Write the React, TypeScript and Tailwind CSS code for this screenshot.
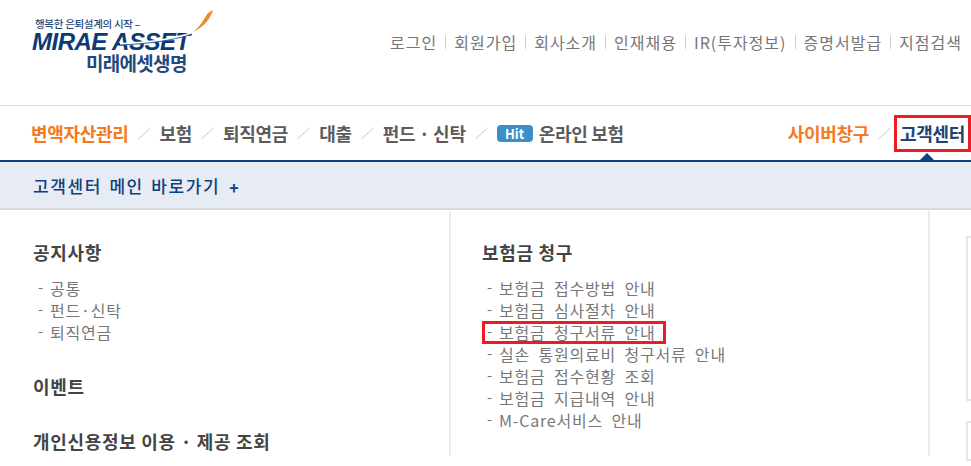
import React from "react";

const font = "font-['Noto_Sans_CJK_KR','Liberation_Sans',sans-serif]";

const topLinks = ["로그인", "회원가입", "회사소개", "인재채용", "IR(투자정보)", "증명서발급", "지점검색"];
const noticeLinks = ["공통", "펀드·신탁", "퇴직연금"];
const claimLinks = [
  "보험금 접수방법 안내",
  "보험금 심사절차 안내",
  "보험금 청구서류 안내",
  "실손 통원의료비 청구서류 안내",
  "보험금 접수현황 조회",
  "보험금 지급내역 안내",
  "M-Care서비스 안내",
];

const Logo: React.FC = () => (
  <div className="relative h-[70px] w-[220px]">
    <span className="absolute left-[35px] top-[17px] text-[10.5px] leading-[13px] font-medium tracking-[-0.3px] text-[#2b4a78] whitespace-nowrap">
      행복한 은퇴설계의 시작 –
    </span>
    <span className="absolute left-[32px] top-[32px] font-['Liberation_Sans',sans-serif] text-[24px] leading-[20px] font-bold italic tracking-[-0.5px] text-[#0b3a75] whitespace-nowrap">
      MIRAE ASSET
    </span>
    <span className="absolute left-[86px] top-[53px] text-[19px] leading-[20px] font-bold tracking-[-0.7px] text-[#1e4a80] whitespace-nowrap">
      미래에셋생명
    </span>
    <svg className="absolute left-0 top-0" width="220" height="70" viewBox="0 0 220 70">
      <path d="M193 32C200 27 204 19 208 13L213 10C211 18 204 27 193 32Z" fill="#f08a24" />
      <path d="M120 44C145 43 172 40 192 33" fill="none" stroke="#ffffff" strokeWidth="2" />
      <path d="M120 45C145 44 172 41 192 34" fill="none" stroke="#0b3a75" strokeWidth="0.8" />
    </svg>
  </div>
);

const Slash: React.FC = () => (
  <svg className="mx-[9px] shrink-0" width="13" height="14" viewBox="0 0 13 14">
    <line x1="0.5" y1="13" x2="12.5" y2="2" stroke="#c9c9c9" strokeWidth="1" />
  </svg>
);

const Section: React.FC<{ title: string; className?: string }> = ({ title, className }) => (
  <h3 className={`text-[18px] leading-[24px] font-bold tracking-[0.7px] text-[#444] ${className ?? ""}`}>{title}</h3>
);

const LinkRow: React.FC<{ label: string }> = ({ label }) => (
  <li className="flex h-[22px] items-center text-[16px] tracking-[0.8px] [word-spacing:4px] text-[#777] whitespace-nowrap">
    <span className="w-[12px] shrink-0 pb-[3px] text-[15px] leading-none">-</span>
    <span>{label}</span>
  </li>
);

export default function App() {
  return (
    <div className={`h-[466px] w-[971px] overflow-hidden bg-white ${font}`}>
      <header className="flex h-[106px] justify-between border-b border-[#dcdcdc]">
        <Logo />
        <nav className="flex h-fit items-center pt-[31px] pr-[9px] text-[16px] leading-[22px] tracking-[1px] text-[#767676]">
          {topLinks.map((t, i) => (
            <React.Fragment key={t}>
              {i > 0 && <span className="mx-[8px] h-[14px] w-px bg-[#cfcfcf]" />}
              <span className="whitespace-nowrap">{t}</span>
            </React.Fragment>
          ))}
        </nav>
      </header>

      <nav className="relative flex h-[56px] items-center justify-between border-b-2 border-[#0f3f7d] pl-[31px] text-[18px] font-bold tracking-[-0.3px] text-[#5c5c5c]">
        <div className="flex items-center">
          <span className="text-[#f47920]">변액자산관리</span>
          <Slash />
          <span>보험</span>
          <Slash />
          <span>퇴직연금</span>
          <Slash />
          <span>대출</span>
          <Slash />
          <span>펀드 · 신탁</span>
          <Slash />
          <span className="mr-[6px] h-[17px] w-[36px] rounded-[4px] bg-[#3b8fc9] text-center text-[13px] leading-[17px] tracking-normal text-white">Hit</span>
          <span>온라인 보험</span>
        </div>
        <div className="flex items-center pr-[6px]">
          <span className="text-[#f47920]">사이버창구</span>
          <Slash />
          <span className="text-[#1d4474]">고객센터</span>
        </div>
        <span className="absolute right-0 top-[9px] h-[37px] w-[77px] border-[3px] border-[#ed1c24]" />
        <span className="absolute right-[37px] top-[47px] h-0 w-0 border-x-[7px] border-b-[7px] border-x-transparent border-b-[#0f3f7d]" />
      </nav>

      <div className="flex h-[48px] items-center border-b-2 border-[#d5dae2] bg-[#e7ebf4] pl-[33px] pt-px text-[17px] font-medium tracking-[1.6px] [word-spacing:2px] text-[#0f3f7d]">
        고객센터 메인 바로가기
        <span className="ml-[9px] mt-[2px] text-[16px] font-bold">+</span>
      </div>

      <main className="flex h-[246px] pt-px text-left">
        <section className="w-[451px] shrink-0 border-r-2 border-[#ebebeb] pl-[33px] pt-[29px]">
          <Section title="공지사항" />
          <ul className="mt-[13px] pl-[5px]">
            {noticeLinks.map((t) => (
              <LinkRow key={t} label={t} />
            ))}
          </ul>
          <Section title="이벤트" className="mt-[31px]" />
          <Section title="개인신용정보 이용 · 제공 조회" className="mt-[31px]" />
        </section>

        <section className="w-[479px] shrink-0 border-r-2 border-[#ebebeb] pl-[31px] pt-[29px]">
          <Section title="보험금 청구" />
          <ul className="relative mt-[13px] pl-[5px]">
            {claimLinks.map((t) => (
              <LinkRow key={t} label={t} />
            ))}
            <li className="absolute left-0 top-[44px] h-[23px] w-[184px] border-[3px] border-[#ed1c24]" />
          </ul>
        </section>

        <aside className="flex-1 pl-[36px] pt-[25px]">
          <div className="h-[165px] w-full border-2 border-r-0 border-[#e6e6e6]" />
          <div className="mt-[20px] h-[40px] w-full border-2 border-r-0 border-[#e6e6e6]" />
        </aside>
      </main>
    </div>
  );
}
